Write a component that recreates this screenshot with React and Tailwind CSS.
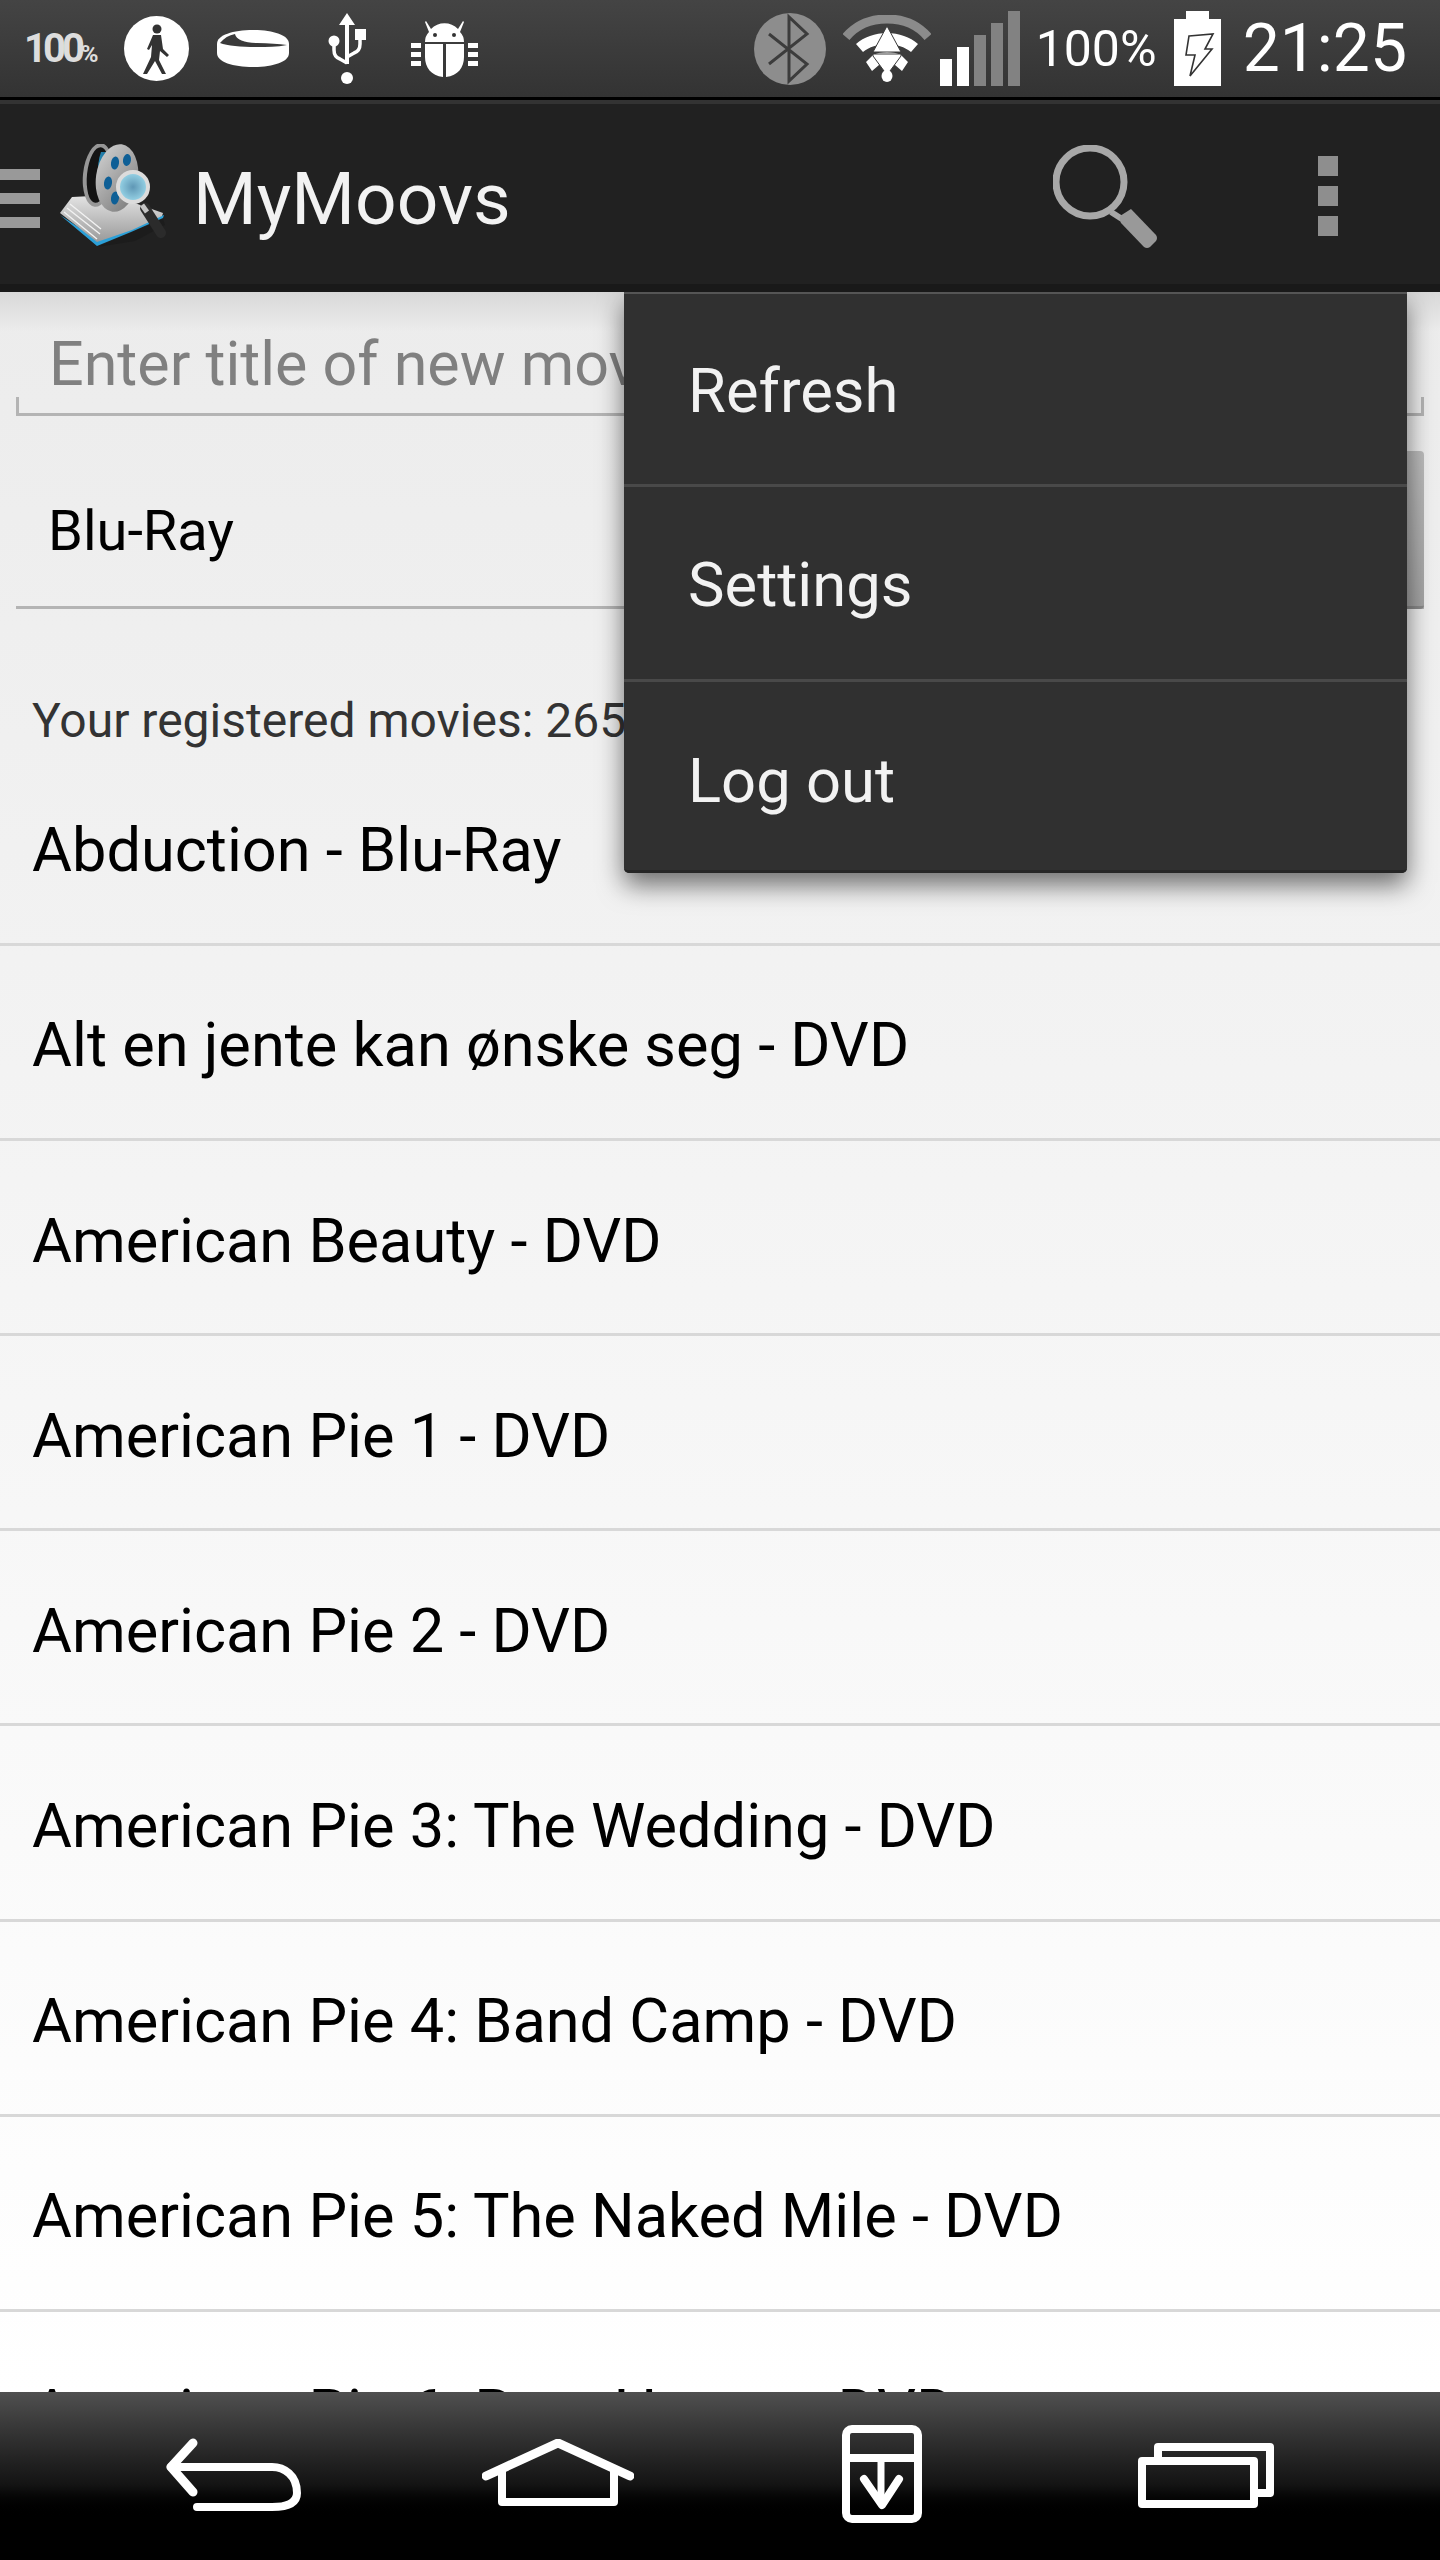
const MOVIES = [
  "Abduction - Blu-Ray",
  "Alt en jente kan ønske seg - DVD",
  "American Beauty - DVD",
  "American Pie 1 - DVD",
  "American Pie 2 - DVD",
  "American Pie 3: The Wedding - DVD",
  "American Pie 4: Band Camp - DVD",
  "American Pie 5: The Naked Mile - DVD",
  "American Pie 6: Beta House - DVD",
];

function WalkIcon() {
  return (
    <svg width="65" height="65" viewBox="0 0 65 65">
      <circle cx="32.5" cy="32.5" r="32.5" fill="#fff" />
      <circle cx="33" cy="13" r="4.5" fill="#333" />
      <path d="M29 19h8l2 14 6 6-2 2-7-6-1 9 7 14h-4l-7-13-8 13h-4l8-17 1-12-3 5-2-1z" fill="#333" />
    </svg>
  );
}

function RingIcon() {
  return (
    <svg width="72" height="37" viewBox="0 0 72 37">
      <path d="M0 14C0 5 16 0 36 0s36 5 36 14v9c0 9-16 14-36 14S0 32 0 23z" fill="#fff" />
      <path d="M3 13C7 8 12 5 18 4c1 6 10 9 22 9s22 1 30 2c-10 2-20 2-30 2-15 0-30-1-37-4z" fill="#3a3a3a" />
    </svg>
  );
}

function UsbIcon() {
  return (
    <svg width="38" height="71" viewBox="0 0 38 71">
      <path d="M19 0l8 12h-6v39h-4V12h-6z" fill="#fff" />
      <circle cx="19" cy="65" r="6" fill="#fff" />
      <rect x="27" y="16" width="11" height="11" fill="#fff" />
      <circle cx="6" cy="28" r="5.5" fill="#fff" />
      <path d="M6 30v7q0 7 6 9l7 4M32 26v5q0 7-6 9l-7 4" fill="none" stroke="#fff" strokeWidth="3.5" />
    </svg>
  );
}

function BugIcon() {
  return (
    <svg width="67" height="56" viewBox="0 0 67 56">
      <path d="M15 0l5 8a19 19 0 0 1 27 0l5-8 1 1-4 10q4 4 4 10H14q0-6 4-10L14 1z" fill="#fff" />
      <circle cx="24" cy="14" r="2" fill="#333" />
      <circle cx="43" cy="14" r="2" fill="#333" />
      <path d="M14 23h18v33C20 55 14 46 14 36zM35 23h18v13c0 10-6 19-18 20z" fill="#fff" />
      <path d="M0 22h10v5H0zM0 31h10v5H0zM0 40h10v5H0zM57 22h10v5H57zM57 31h10v5H57zM57 40h10v5H57z" fill="#fff" />
    </svg>
  );
}

function BluetoothIcon() {
  return (
    <svg width="72" height="72" viewBox="0 0 72 72">
      <ellipse cx="36" cy="36" rx="36" ry="36" fill="#8d8d8d" />
      <path d="M15 21l38 30-18 17V4l18 17-38 30" fill="none" stroke="#3c3c3c" strokeWidth="3" />
    </svg>
  );
}

function WifiIcon() {
  return (
    <svg width="88" height="67" viewBox="0 0 88 67">
      <path d="M3 22C14 9 28 4 44 4s30 5 41 18" fill="none" stroke="#8b8b8b" strokeWidth="9" />
      <path d="M13 29c8-7 19-11 31-11s23 4 31 11l-7 8c-6-5-15-8-24-8s-18 3-24 8z" fill="#fff" />
      <path d="M30 40c4-2 9-3 14-3s10 1 14 3l7 7-6 9-7-6H36l-7 6-6-9z" fill="#fff" />
      <path d="M44 11l14 26H30z" fill="#fff" stroke="#3a3a3a" strokeWidth="1" />
      <path d="M30 39h28v2L44 60 30 41z" fill="#fff" stroke="#3a3a3a" strokeWidth="1" />
      <ellipse cx="44" cy="61" rx="5.5" ry="6" fill="#fff" />
    </svg>
  );
}

function SignalBars() {
  const bars = [
    { h: "h-[27px]", bg: "bg-white" },
    { h: "h-[39px]", bg: "bg-white" },
    { h: "h-[51px]", bg: "bg-[#828282]" },
    { h: "h-[63px]", bg: "bg-[#828282]" },
    { h: "h-[75px]", bg: "bg-[#828282]" },
  ];
  return (
    <div className="flex items-end gap-[5px] h-[75px]">
      {bars.map((bar, i) => (
        <div key={i} className={`w-[12px] ${bar.h} ${bar.bg}`} />
      ))}
    </div>
  );
}

function BatteryIcon() {
  return (
    <svg width="47" height="75" viewBox="0 0 47 75">
      <path d="M12 0h23v8h12v67H0V8h12z" fill="#fff" />
      <path d="M15 25l24-2-8 15h7L16 65l5-21h-9z" fill="#fff" stroke="#333" strokeWidth="1.6" />
    </svg>
  );
}

function Logo() {
  return (
    <svg width="110" height="106" viewBox="0 0 110 106">
      <defs>
        <linearGradient id="page" x1="0" y1="0" x2="0" y2="1">
          <stop offset="0" stopColor="#e4e4e4" />
          <stop offset="1" stopColor="#9a9a9a" />
        </linearGradient>
        <linearGradient id="metal" x1="0" y1="0" x2="1" y2="1">
          <stop offset="0" stopColor="#d4d4d4" />
          <stop offset="1" stopColor="#767676" />
        </linearGradient>
        <linearGradient id="reelBlue" x1="0" y1="0" x2="1" y2="0">
          <stop offset="0" stopColor="#2a8db8" />
          <stop offset="1" stopColor="#0b4c78" />
        </linearGradient>
        <radialGradient id="lens" cx="0.5" cy="0.5" r="0.6">
          <stop offset="0" stopColor="#5f97b5" />
          <stop offset="1" stopColor="#a6e3f3" />
        </radialGradient>
      </defs>
      <path d="M39 103l66-28 2 6-30 16z" fill="#1c1c1c" />
      <path d="M2 71l37 31 34-14 32-14 1-3-34 12-34 12z" fill="#2ba0d8" />
      <path d="M2 69l12-16 40-2 51 18-1 3-30 14-35 12z" fill="url(#page)" />
      <path d="M6 68l33 27M9 64l33 26M12 60l31 25" stroke="#f2f2f2" strokeWidth="1.4" fill="none" />
      <ellipse cx="40" cy="31" rx="15" ry="32" transform="rotate(6 40 31)" fill="#979797" />
      <ellipse cx="40" cy="31" rx="11" ry="28" transform="rotate(6 40 31)" fill="#141414" />
      <path d="M43 8h16v52H44C39 44 38 22 43 8z" fill="url(#reelBlue)" />
      <ellipse cx="59" cy="34" rx="21" ry="34" transform="rotate(8 59 34)" fill="url(#metal)" />
      <ellipse cx="57" cy="19" rx="4" ry="6.5" transform="rotate(8 57 19)" fill="#0e5f96" />
      <ellipse cx="69" cy="16" rx="4" ry="6" transform="rotate(8 69 16)" fill="#0e5f96" />
      <ellipse cx="50" cy="39" rx="4" ry="6.5" transform="rotate(8 50 39)" fill="#0e5f96" />
      <ellipse cx="57" cy="54" rx="4" ry="6.5" transform="rotate(8 57 54)" fill="#0e5f96" />
      <path d="M87 64l16 25" stroke="#2b2b2b" strokeWidth="10" strokeLinecap="round" />
      <path d="M84 61l5 7" stroke="#c4c4c4" strokeWidth="5" />
      <circle cx="75" cy="43" r="15" fill="url(#lens)" stroke="#dcdcdc" strokeWidth="4" />
    </svg>
  );
}

function SearchIcon() {
  return (
    <svg width="106" height="104" viewBox="0 0 106 104">
      <circle cx="37" cy="37" r="34" fill="none" stroke="#a8a8a8" strokeWidth="7" />
      <path d="M58 67l11 7" stroke="#a8a8a8" strokeWidth="6" />
      <path d="M67 71l11-7 25 26q2 3 0 6l-6 6q-3 2-6 0L68 78q-2-3-1-7z" fill="#999" />
    </svg>
  );
}

function BackIcon() {
  return (
    <svg width="136" height="74" viewBox="0 0 136 74" fill="none" stroke="#fff" strokeWidth="9" strokeLinecap="round" strokeLinejoin="round">
      <path d="M27 5L5 29l22 25" />
      <path d="M5 29h101c12 0 25 8 25 26M31 69h75c12 0 25-2 25-14" strokeWidth="8" />
    </svg>
  );
}

function HomeIcon() {
  return (
    <svg width="152" height="68" viewBox="0 0 152 68" fill="none" stroke="#fff" strokeLinejoin="round">
      <path d="M4 37L76 4l72 33" strokeWidth="9" strokeLinecap="round" />
      <path d="M20 30v33h112V30" strokeWidth="8" />
    </svg>
  );
}

function DownloadIcon() {
  return (
    <svg width="80" height="98" viewBox="0 0 80 98" fill="none" stroke="#fff" strokeLinejoin="round">
      <rect x="4" y="4" width="72" height="90" rx="6" strokeWidth="8" />
      <path d="M4 33h72" strokeWidth="8" />
      <path d="M39 33v44" strokeWidth="7" />
      <path d="M22 54l18 26 17-26" strokeWidth="8" strokeLinecap="round" />
    </svg>
  );
}

function RecentsIcon() {
  return (
    <svg width="136" height="65" viewBox="0 0 136 65" fill="none" stroke="#fff" strokeLinejoin="round">
      <path d="M20 14V4h112v46h-14" strokeWidth="8" />
      <rect x="4" y="18" width="112" height="43" strokeWidth="8" />
    </svg>
  );
}

export default function App() {
  return (
    <div className="h-[2560px] w-[1440px] flex flex-col overflow-hidden bg-white font-['Roboto',sans-serif]">
      {/* status bar */}
      <div className="h-[97px] shrink-0 flex items-center justify-between bg-gradient-to-b from-[#444444] to-[#333333]">
        <div className="flex items-center pl-[24px]">
          <span className="w-[70px] text-[40px] leading-none font-bold tracking-[-4px] text-[#dddddd]">
            100<span className="text-[24px] tracking-[-1px]">%</span>
          </span>
          <div className="ml-[30px]"><WalkIcon /></div>
          <div className="ml-[28px]"><RingIcon /></div>
          <div className="ml-[39px]"><UsbIcon /></div>
          <div className="ml-[45px]"><BugIcon /></div>
        </div>
        <div className="flex items-center pr-[33px]">
          <BluetoothIcon />
          <div className="ml-[17px]"><WifiIcon /></div>
          <div className="ml-[9px]"><SignalBars /></div>
          <span className="ml-[16px] w-[122px] text-[50px] leading-none text-white">100%</span>
          <div className="ml-[16px]"><BatteryIcon /></div>
          <span className="ml-[22px] text-[66px] leading-none text-white">21:25</span>
        </div>
      </div>
      <div className="h-[3px] shrink-0 bg-black" />

      {/* action bar */}
      <div className="h-[192px] shrink-0 flex items-center justify-between bg-[#212121] border-t-[4px] border-t-[#333333] border-b-[8px] border-b-[#191919]">
        <div className="flex items-center">
          <div className="mt-[9px] flex flex-col gap-[13px] w-[40px]">
            <div className="h-[11px] bg-[#999999]" />
            <div className="h-[11px] bg-[#999999]" />
            <div className="h-[11px] bg-[#999999]" />
          </div>
          <div className="ml-[18px] mt-[6px]"><Logo /></div>
          <span className="ml-[25px] mt-[10px] text-[73px] leading-none text-[#f2f2f2]">MyMoovs</span>
        </div>
        <div className="flex items-center">
          <div className="mt-[6px]"><SearchIcon /></div>
          <div className="ml-[159px] mr-[102px] mt-[4px] flex flex-col gap-[10px]">
            <div className="w-[20px] h-[20px] bg-[#8e8e8e]" />
            <div className="w-[20px] h-[20px] bg-[#8e8e8e]" />
            <div className="w-[20px] h-[20px] bg-[#8e8e8e]" />
          </div>
        </div>
      </div>

      {/* content */}
      <div className="relative flex-1 overflow-hidden bg-gradient-to-b from-[#ececec] to-[#ffffff]">
        <div className="absolute top-0 inset-x-0 h-[40px] bg-gradient-to-b from-[#d8d8d8] to-transparent" />

        <div className="relative mx-[16px] h-[124px] flex items-center border-b-[3px] border-[#b4b4b4] pl-[33px] pt-[24px]">
          <span className="text-[61px] text-[#808080] whitespace-nowrap">Enter title of new movie</span>
          <div className="absolute left-0 bottom-0 w-[3px] h-[16px] bg-[#b4b4b4]" />
          <div className="absolute right-0 bottom-0 w-[3px] h-[16px] bg-[#b4b4b4]" />
        </div>

        <div className="relative mx-[16px] mt-[35px] h-[158px] flex items-center border-b-[3px] border-[#b4b4b4] pl-[32px] pt-[4px]">
          <span className="text-[56px] text-black">Blu-Ray</span>
          <div className="absolute right-0 top-0 bottom-[-3px] w-[60px] rounded-[4px] bg-gradient-to-b from-[#bcbcbc] to-[#a4a4a4] border-b-[3px] border-[#8a8a8a]" />
        </div>

        <div className="h-[141.5px] flex items-end px-[32px] pb-[2px] text-[48px] leading-[56px] text-[#333333] whitespace-nowrap">
          Your registered movies: 265
        </div>

        <div>
          {MOVIES.map((title) => (
            <div
              key={title}
              className="h-[195.2px] flex items-center px-[32px] pt-[9px] border-b-[3px] border-[#d8d8d8] text-[61.3px] text-black whitespace-nowrap"
            >
              {title}
            </div>
          ))}
        </div>

        {/* overflow menu */}
        <div className="absolute top-0 left-[624px] w-[783px] border-t-[2px] border-[#555555] rounded-b-[5px] bg-[#303030] shadow-[0_12px_26px_rgba(0,0,0,0.55)]">
          <div className="h-[193px] flex items-center pl-[64px] pt-[4px] text-[61.5px] text-[#f2f2f2] border-b-[3px] border-[#494949]">Refresh</div>
          <div className="h-[195px] flex items-center pl-[64px] pt-[4px] text-[61.5px] text-[#f2f2f2] border-b-[3px] border-[#494949]">Settings</div>
          <div className="h-[191px] flex items-center pl-[64px] pt-[10px] text-[61.5px] text-[#f2f2f2] border-b-[3px] border-[#262626] rounded-b-[5px]">Log out</div>
        </div>
      </div>

      {/* nav bar */}
      <div className="h-[168px] shrink-0 flex items-center bg-gradient-to-b from-[#505050] via-[#141414] via-[55%] to-black to-[75%]">
        <div className="ml-[166px] mt-[-2px]"><BackIcon /></div>
        <div className="ml-[180px] mt-[-6px]"><HomeIcon /></div>
        <div className="ml-[208px] mt-[-4px]"><DownloadIcon /></div>
        <div className="ml-[216px] mt-[-2px]"><RecentsIcon /></div>
      </div>
    </div>
  );
}
